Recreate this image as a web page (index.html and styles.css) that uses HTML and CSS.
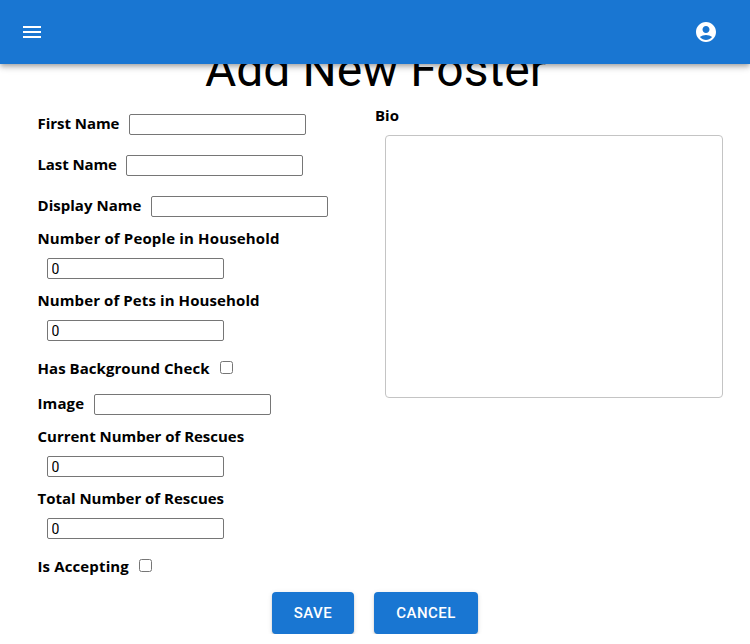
FILE: index.html
```html
<!DOCTYPE html>
<html lang="en">
<head>
<meta charset="utf-8">
<title>Add New Foster</title>
<link rel="stylesheet" href="styles.css">
</head>
<body>
<header class="app-bar">
  <svg class="icon" viewBox="0 0 24 24"><path d="M3 18h18v-2H3v2zm0-5h18v-2H3v2zm0-7v2h18V6H3z"/></svg>
  <svg class="icon" viewBox="0 0 24 24"><path d="M12 2C6.48 2 2 6.48 2 12s4.480 10 10 10 10-4.480 10-10S17.520 2 12 2zm0 4c1.930 0 3.500 1.570 3.500 3.500S13.930 13 12 13s-3.500-1.570-3.500-3.500S10.070 6 12 6zm0 14c-2.030 0-4.430-.82-6.140-2.880C7.550 15.800 9.680 15 12 15s4.450.8 6.140 2.120C16.430 19.180 14.030 20 12 20z"/></svg>
</header>
<main>
  <h1 class="title">Add New Foster</h1>
  <form>
    <div class="columns">
      <div class="fields">
        <div class="row"><label class="label first" for="first">First Name</label><input class="box" id="first" type="text"></div>
        <div class="row"><label class="label last" for="last">Last Name</label><input class="box" id="last" type="text"></div>
        <div class="row"><label class="label display" for="display">Display Name</label><input class="box" id="display" type="text"></div>
        <div class="stack"><label class="label people" for="people">Number of People in Household</label><input class="box" id="people" type="text" value="0"></div>
        <div class="stack"><label class="label pets" for="pets">Number of Pets in Household</label><input class="box" id="pets" type="text" value="0"></div>
        <div class="row check"><label class="label background" for="background">Has Background Check</label><input class="tick" id="background" type="checkbox"></div>
        <div class="row"><label class="label image" for="image">Image</label><input class="box" id="image" type="text"></div>
        <div class="stack"><label class="label current" for="current">Current Number of Rescues</label><input class="box" id="current" type="text" value="0"></div>
        <div class="stack"><label class="label total" for="total">Total Number of Rescues</label><input class="box" id="total" type="text" value="0"></div>
        <div class="row check"><label class="label accepting" for="accepting">Is Accepting</label><input class="tick" id="accepting" type="checkbox"></div>
      </div>
      <div class="bio">
        <label class="label" for="bio">Bio</label>
        <textarea class="bio-box" id="bio"></textarea>
      </div>
    </div>
    <div class="actions">
      <button class="btn save" type="button">SAVE</button>
      <button class="btn cancel" type="button">CANCEL</button>
    </div>
  </form>
</main>
</body>
</html>
```
FILE: styles.css
```css
* { box-sizing: border-box; }
html { overflow: hidden; }
body { margin: 0; background: #fff; color: #000; font-family: "Open Sans", "Noto Sans", sans-serif; }
.app-bar {
  position: sticky; top: 0; z-index: 2; height: 64px; padding: 0 32px 0 20px;
  display: flex; align-items: center; justify-content: space-between;
  background: #1976d2;
  box-shadow: 0 2px 4px -1px rgba(0,0,0,.2), 0 4px 5px 0 rgba(0,0,0,.14), 0 1px 10px 0 rgba(0,0,0,.12);
}
.icon { width: 24px; height: 24px; fill: #fff; }
.title { margin: -23px 0 0; padding-left: 1px; height: 63px; font: 400 48px/57px Roboto, sans-serif; letter-spacing: .04px; text-align: center; }
.columns { display: flex; height: 478px; }
.fields { width: 375px; padding-left: 37px; }
.label { padding-left: .5px; font-size: 15px; font-weight: 700; line-height: 21px; white-space: nowrap; }
.row { display: flex; height: 41px; padding-top: 9px; }
.row .box { margin: 1px 0 0 10px; }
.row.check { height: 33px; padding-top: 7px; }
.tick { width: 13px; height: 13px; margin: 3px 0 0 10px; }
.stack { height: 62px; display: flex; flex-direction: column; align-items: flex-start; padding-top: 1px; }
.stack .box { margin: 9px 0 0 10px; }
.box {
  width: 177px; height: 21px; padding: 1px 3.5px; border: 1px solid #767676; border-radius: 2px;
  background: #fff; color: #000; font: 14px/17px Roboto, sans-serif;
}
.first { width: 82px; letter-spacing: -.04px; }
.last { width: 79px; letter-spacing: -.1px; }
.display { width: 104px; letter-spacing: .03px; }
.people { letter-spacing: .15px; }
.pets { letter-spacing: .1px; }
.background { width: 173px; letter-spacing: .05px; }
.image { width: 47px; letter-spacing: .1px; }
.current, .total { letter-spacing: -.02px; }
.accepting { width: 92px; letter-spacing: .13px; }
.bio { display: flex; flex-direction: column; align-items: flex-start; padding-top: 1px; }
.bio .label { padding-left: 0; }
.bio-box {
  width: 338px; height: 263px; margin: 9px 0 0 10px; resize: none;
  border: 1px solid #c4c4c4; border-radius: 4px; background: #fff;
}
.actions { display: flex; justify-content: center; gap: 20px; padding-top: 10px; }
.btn {
  height: 42px; padding: 0; border: 0; border-radius: 4px; background: #1976d2; color: #fff;
  font: 500 15px/26px Roboto, sans-serif; letter-spacing: .43px;
  box-shadow: 0 3px 1px -2px rgba(0,0,0,.2), 0 2px 2px 0 rgba(0,0,0,.14), 0 1px 5px 0 rgba(0,0,0,.12);
}
.save { width: 82px; }
.cancel { width: 104px; }
```
